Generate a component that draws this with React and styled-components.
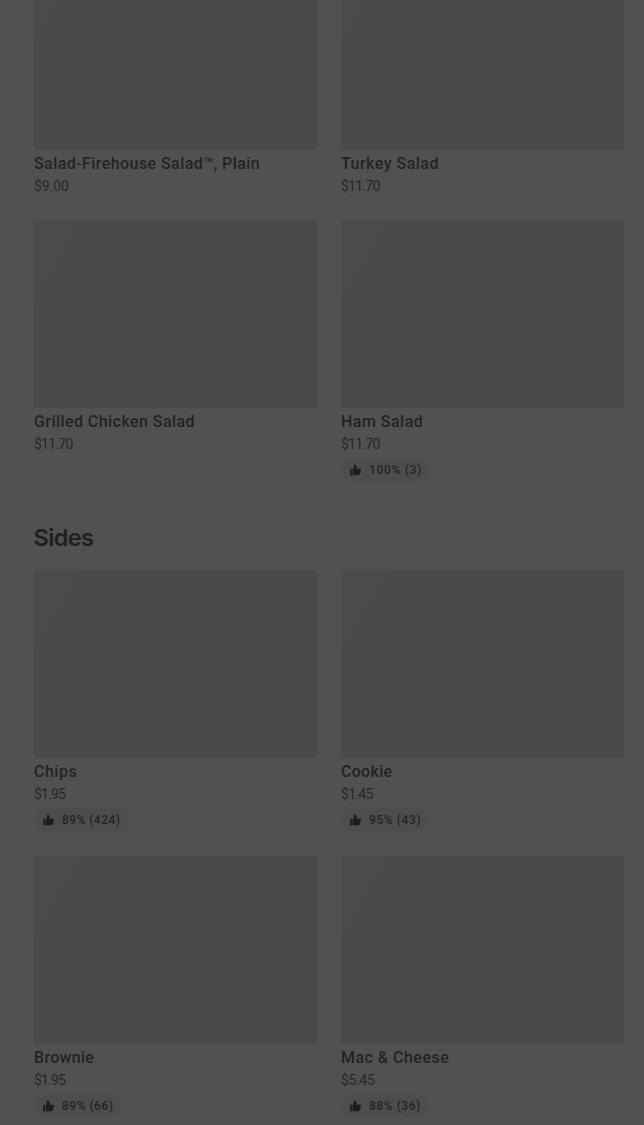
import React from "react";
import styled, { createGlobalStyle } from "styled-components";

const GlobalStyle = createGlobalStyle`
  * {
    box-sizing: border-box;
  }

  body {
    margin: 0;
    background-color: #515151;
    font-family: Roboto, "Liberation Sans", sans-serif;
  }
`;

// the list is already scrolled, the first row is cut by the top edge
const Page = styled.main`
  height: 1125px;
  overflow: hidden;
  padding: 0 20px 0 34px;
`;

const Section = styled.section`
  margin-top: ${(props) => props.$offset || 0}px;
`;

const SectionTitle = styled.h2`
  margin: 0 0 16px;
  font-family: Inter, Roboto, sans-serif;
  font-size: 23.5px;
  line-height: 32px;
  font-weight: 600;
  letter-spacing: -0.65px;
  text-indent: -0.5px;
  color: #1f1f1f;
`;

const Grid = styled.div`
  display: grid;
  grid-template-columns: 1fr 1fr;
  gap: 24px;
`;

const Card = styled.article`
  display: flex;
  flex-direction: column;
  align-items: flex-start;
`;

const Photo = styled.div`
  width: 100%;
  height: 188px;
  margin-bottom: 2px;
  background: linear-gradient(120deg, #4b4b4b 12%, #4a4a4a 12%);
`;

const Name = styled.h3`
  margin: 0;
  font-size: 16px;
  line-height: 24px;
  font-weight: 500;
  letter-spacing: ${(props) => props.$spacing}px;
  white-space: nowrap;
  color: #232323;
`;

const Price = styled.p`
  margin: 0;
  font-size: 14px;
  line-height: 20px;
  letter-spacing: ${(props) => props.$spacing}px;
  color: #272727;
`;

const Rating = styled.div`
  display: flex;
  align-items: center;
  gap: 8px;
  height: 24px;
  margin-top: 4px;
  padding: 0 8px;
  border-radius: 12px;
  background-color: #4d4d4d;
  font-size: 12px;
  font-weight: 500;
  letter-spacing: ${(props) => props.$spacing}px;
  color: #242424;
`;

const ThumbIcon = styled.svg`
  width: 12px;
  height: 12px;
  fill: #1d1d1d;
`;

const salads = [
  { name: "Salad-Firehouse Salad™, Plain", nameSpacing: 0.43, price: "$9.00", priceSpacing: -0.05 },
  { name: "Turkey Salad", nameSpacing: 0.48, price: "$11.70", priceSpacing: -0.75 },
  { name: "Grilled Chicken Salad", nameSpacing: 0.44, price: "$11.70", priceSpacing: -0.75 },
  { name: "Ham Salad", nameSpacing: 0.48, price: "$11.70", priceSpacing: -0.75, rating: "100% (3)", ratingSpacing: 0.68 },
];

const sides = [
  { name: "Chips", nameSpacing: 0.5, price: "$1.95", priceSpacing: -0.85, rating: "89% (424)", ratingSpacing: 0.45 },
  { name: "Cookie", nameSpacing: 0.3, price: "$1.45", priceSpacing: -0.7, rating: "95% (43)", ratingSpacing: 0.6 },
  { name: "Brownie", nameSpacing: 0.3, price: "$1.95", priceSpacing: -0.85, rating: "89% (66)", ratingSpacing: 0.5 },
  { name: "Mac & Cheese", nameSpacing: 0.48, price: "$5.45", priceSpacing: -0.3, rating: "88% (36)", ratingSpacing: 0.55 },
];

function MenuItem({ item }) {
  return (
    <Card>
      <Photo />
      <Name $spacing={item.nameSpacing}>{item.name}</Name>
      <Price $spacing={item.priceSpacing}>{item.price}</Price>
      {item.rating && (
        <Rating $spacing={item.ratingSpacing}>
          <ThumbIcon viewBox="0 0 12 12" aria-hidden="true">
            <path d="M1 4.800h1.800v6.700H1zM3.500 5.500 4.800 4V.6l1.300.2c1 .2 1.500.8 1.500 1.700v2.300H12l-.7 4.500c-.2 1.300-.9 2-2.100 2H3.500z" />
          </ThumbIcon>
          <span>{item.rating}</span>
        </Rating>
      )}
    </Card>
  );
}

export default function App() {
  return (
    <>
      <GlobalStyle />
      <Page>
        <Section $offset={-38}>
          <Grid>
            {salads.map((item) => (
              <MenuItem key={item.name} item={item} />
            ))}
          </Grid>
        </Section>
        <Section $offset={40}>
          <SectionTitle>Sides</SectionTitle>
          <Grid>
            {sides.map((item) => (
              <MenuItem key={item.name} item={item} />
            ))}
          </Grid>
        </Section>
      </Page>
    </>
  );
}
